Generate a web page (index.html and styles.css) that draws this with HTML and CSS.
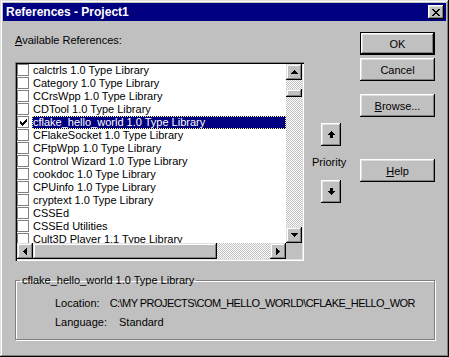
FILE: index.html
```html
<!DOCTYPE html>
<html lang="en">
<head>
    <meta charset="UTF-8">
    <meta name="viewport" content="width=device-width, initial-scale=1.0">
    <title>References - Project1</title>
    <link rel="stylesheet" href="styles.css">
</head>
<body>

<div class="window">
    <div class="titlebar">
        <span class="title">References - Project1</span>
        <button class="close-btn" aria-label="Close">
            <svg width="8" height="7" viewBox="0 0 8 7" shape-rendering="crispEdges"><path fill="#000" d="M0 0h2v1h-2zM6 0h2v1h-2zM1 1h2v1h-2zM5 1h2v1h-2zM2 2h4v1h-4zM3 3h2v1h-2zM2 4h4v1h-4zM1 5h2v1h-2zM5 5h2v1h-2zM0 6h2v1h-2zM6 6h2v1h-2z"/></svg>
        </button>
    </div>

    <div class="dialog-body">
        <div class="top-row">
            <div class="refs">
                <div class="field-label"><u>A</u>vailable References:</div>

                <div class="listbox">
                    <ul class="list-items">
                        <li class="list-item"><span class="check"></span><span class="item-text">calctrls 1.0 Type Library</span></li>
                        <li class="list-item"><span class="check"></span><span class="item-text">Category 1.0 Type Library</span></li>
                        <li class="list-item"><span class="check"></span><span class="item-text">CCrsWpp 1.0 Type Library</span></li>
                        <li class="list-item"><span class="check"></span><span class="item-text">CDTool 1.0 Type Library</span></li>
                        <li class="list-item selected">
                            <span class="check">
                                <svg width="7" height="7" viewBox="0 0 7 7" shape-rendering="crispEdges"><path fill="#000" d="M6 0h1v3h-1v1h-1v1h-1v1h-1v1h-1v-1h-1v-1h-1v-3h1v1h1v1h1v-1h1v-1h1z"/></svg>
                            </span>
                            <span class="item-text">cflake_hello_world 1.0 Type Library</span>
                        </li>
                        <li class="list-item"><span class="check"></span><span class="item-text">CFlakeSocket 1.0 Type Library</span></li>
                        <li class="list-item"><span class="check"></span><span class="item-text">CFtpWpp 1.0 Type Library</span></li>
                        <li class="list-item"><span class="check"></span><span class="item-text">Control Wizard 1.0 Type Library</span></li>
                        <li class="list-item"><span class="check"></span><span class="item-text">cookdoc 1.0 Type Library</span></li>
                        <li class="list-item"><span class="check"></span><span class="item-text">CPUinfo 1.0 Type Library</span></li>
                        <li class="list-item"><span class="check"></span><span class="item-text">cryptext 1.0 Type Library</span></li>
                        <li class="list-item"><span class="check"></span><span class="item-text">CSSEd</span></li>
                        <li class="list-item"><span class="check"></span><span class="item-text">CSSEd Utilities</span></li>
                        <li class="list-item"><span class="check"></span><span class="item-text">Cult3D Player 1.1 Type Library</span></li>
                    </ul>

                    <!-- Vertical scrollbar -->
                    <div class="vscroll">
                        <div class="scroll-btn">
                            <svg width="7" height="4" viewBox="0 0 7 4" shape-rendering="crispEdges"><path fill="#000" d="M3 0h1v1h1v1h1v1h1v1h-7v-1h1v-1h1v-1h1z"/></svg>
                        </div>
                        <div class="vthumb"></div>
                        <div class="scroll-btn scroll-end">
                            <svg width="7" height="4" viewBox="0 0 7 4" shape-rendering="crispEdges"><path fill="#000" d="M0 0h7v1h-1v1h-1v1h-1v1h-1v-1h-1v-1h-1v-1h-1z"/></svg>
                        </div>
                    </div>

                    <!-- Horizontal scrollbar -->
                    <div class="hscroll">
                        <div class="scroll-btn">
                            <svg width="4" height="7" viewBox="0 0 4 7" shape-rendering="crispEdges"><path fill="#000" d="M3 0h1v7h-1v-1h-1v-1h-1v-1h-1v-1h1v-1h1v-1h1z"/></svg>
                        </div>
                        <div class="hthumb"></div>
                        <div class="scroll-btn scroll-end">
                            <svg width="4" height="7" viewBox="0 0 4 7" shape-rendering="crispEdges"><path fill="#000" d="M0 0h1v1h1v1h1v1h1v1h-1v1h-1v1h-1v1h-1z"/></svg>
                        </div>
                    </div>
                    <div class="corner"></div>
                </div>
            </div>

            <div class="priority">
                <button class="btn arrow-btn" aria-label="Move up">
                    <svg width="7" height="7" viewBox="0 0 7 7" shape-rendering="crispEdges"><path fill="#000" d="M3 0h1v1h1v1h1v1h1v1h-2v3h-3v-3h-2v-1h1v-1h1v-1h1z"/></svg>
                </button>
                <div class="priority-label">Priority</div>
                <button class="btn arrow-btn" aria-label="Move down">
                    <svg width="7" height="7" viewBox="0 0 7 7" shape-rendering="crispEdges"><path fill="#000" d="M2 0h3v3h2v1h-1v1h-1v1h-1v1h-1v-1h-1v-1h-1v-1h-1v-1h2z"/></svg>
                </button>
            </div>

            <div class="buttons">
                <button class="btn default">OK</button>
                <button class="btn cancel">Cancel</button>
                <button class="btn browse"><u>B</u>rowse...</button>
                <button class="btn help"><u>H</u>elp</button>
            </div>
        </div>

        <fieldset class="group">
            <legend>cflake_hello_world 1.0 Type Library</legend>
            <div class="details">
                <div class="detail-row">
                    <span class="detail-label">Location:</span>
                    <span class="path">C:\MY PROJECTS\COM_HELLO_WORLD\CFLAKE_HELLO_WOR</span>
                </div>
                <div class="detail-row">
                    <span class="detail-label">Language:</span>
                    <span>Standard</span>
                </div>
            </div>
        </fieldset>
    </div>
</div>

</body>
</html>
```

FILE: styles.css
```css
/* Page */
body {
    margin: 0;
    font-family: "Liberation Sans", Arial, sans-serif;
    font-size: 11px;
    color: #000000;
    background: #c0c0c0;
}

/* Dialog window frame */
.window {
    width: 449px;
    height: 357px;
    box-sizing: border-box;
    padding: 3px;
    background: #c0c0c0;
    box-shadow: inset -1px -1px #000000, inset 1px 1px #dfdfdf,
                inset -2px -2px #808080, inset 2px 2px #ffffff;
    display: flex;
    flex-direction: column;
}

/* Title bar */
.titlebar {
    height: 18px;
    background: #000080;
    display: flex;
    align-items: center;
    justify-content: space-between;
    padding: 0 2px 0 3px;
}

.title {
    color: #ffffff;
    font-size: 12px;
    font-weight: bold;
    line-height: 14px;
}

.close-btn {
    width: 16px;
    height: 14px;
    padding: 0;
    border: none;
    background: #c0c0c0;
    box-shadow: inset -1px -1px #000000, inset 1px 1px #ffffff,
                inset -2px -2px #808080, inset 2px 2px #dfdfdf;
    display: flex;
    align-items: center;
    justify-content: center;
}

/* Body layout */
.dialog-body {
    padding: 11px 11px 0 12px;
}

.top-row {
    display: flex;
    align-items: flex-start;
}

.refs {
    width: 289px;
}

.field-label {
    margin-top: 2px;
    line-height: 13px;
}

/* List box with check items */
.listbox {
    margin-top: 15px;
    height: 199px;
    box-sizing: border-box;
    padding: 2px;
    background: #ffffff;
    box-shadow: inset 1px 1px #808080, inset 2px 2px #000000,
                inset -1px -1px #ffffff, inset -2px -2px #dfdfdf;
    display: grid;
    grid-template-columns: 1fr 16px;
    grid-template-rows: 1fr 16px;
}

.list-items {
    list-style: none;
    margin: 0;
    padding: 0;
    overflow: hidden;
}

.list-item {
    display: flex;
    align-items: flex-start;
    height: 13px;
    white-space: nowrap;
}

.check {
    flex: none;
    width: 12px;
    height: 12px;
    box-sizing: border-box;
    margin-right: 3px;
    border: 1px solid #808080;
    background: #ffffff;
    display: flex;
    align-items: center;
    justify-content: center;
}

.item-text {
    flex: 1;
    padding-left: 1px;
    line-height: 13px;
    overflow: hidden;
}

.selected .item-text {
    background: #000080;
    color: #ffffff;
    outline: 1px dotted #ffff80;
    outline-offset: -1px;
}

/* Scrollbars */
.vscroll,
.hscroll {
    display: flex;
    background: repeating-conic-gradient(#ffffff 0% 25%, #c0c0c0 0% 50%) 0 0 / 2px 2px;
}

.vscroll {
    flex-direction: column;
}

.scroll-btn {
    flex: none;
    width: 16px;
    height: 16px;
    background: #c0c0c0;
    box-shadow: inset -1px -1px #000000, inset 1px 1px #dfdfdf,
                inset -2px -2px #808080, inset 2px 2px #ffffff;
    display: flex;
    align-items: center;
    justify-content: center;
}

.scroll-end {
    margin-top: auto;
    margin-left: auto;
}

.vthumb,
.hthumb {
    flex: none;
    background: #c0c0c0;
    box-shadow: inset -1px -1px #000000, inset 1px 1px #dfdfdf,
                inset -2px -2px #808080, inset 2px 2px #ffffff;
}

.vthumb {
    width: 16px;
    height: 8px;
    margin-top: 9px;
}

.hthumb {
    width: 184px;
    height: 16px;
}

.corner {
    background: #c0c0c0;
}

/* Push buttons */
.btn {
    box-sizing: border-box;
    padding: 0;
    border: none;
    font: inherit;
    color: #000000;
    background: #c0c0c0;
    box-shadow: inset -1px -1px #000000, inset 1px 1px #ffffff,
                inset -2px -2px #808080, inset 2px 2px #dfdfdf;
    display: flex;
    align-items: center;
    justify-content: center;
}

.buttons {
    margin-left: 13px;
    display: flex;
    flex-direction: column;
}

.buttons .btn {
    width: 75px;
    height: 23px;
}

.btn.default {
    border: 1px solid #000000;
}

.btn.cancel {
    margin-top: 3px;
}

.btn.browse {
    margin-top: 13px;
}

.btn.help {
    margin-top: 42px;
}

/* Priority arrows */
.priority {
    margin-left: 7px;
    width: 36px;
    display: flex;
    flex-direction: column;
    align-items: flex-start;
}

.arrow-btn {
    width: 20px;
    height: 23px;
    margin-left: 10px;
}

.arrow-btn:first-child {
    margin-top: 91px;
}

.priority-label {
    margin: 10px 0 11px 1px;
    line-height: 13px;
}

/* Selected reference details */
.group {
    margin: 13px 0 0 0;
    padding: 0;
    min-width: 0;
    border: 1px solid #808080;
    box-shadow: inset 1px 1px #ffffff, 1px 1px #ffffff;
}

.group legend {
    margin-left: 4px;
    padding: 0 2px;
    line-height: 13px;
}

.details {
    padding: 10px 0 10px 39px;
}

.detail-row {
    display: flex;
    gap: 12px;
    line-height: 13px;
    white-space: nowrap;
}

.detail-row + .detail-row {
    margin-top: 6px;
}

.path {
    margin-left: -2px;
    letter-spacing: -0.55px;
}
```
